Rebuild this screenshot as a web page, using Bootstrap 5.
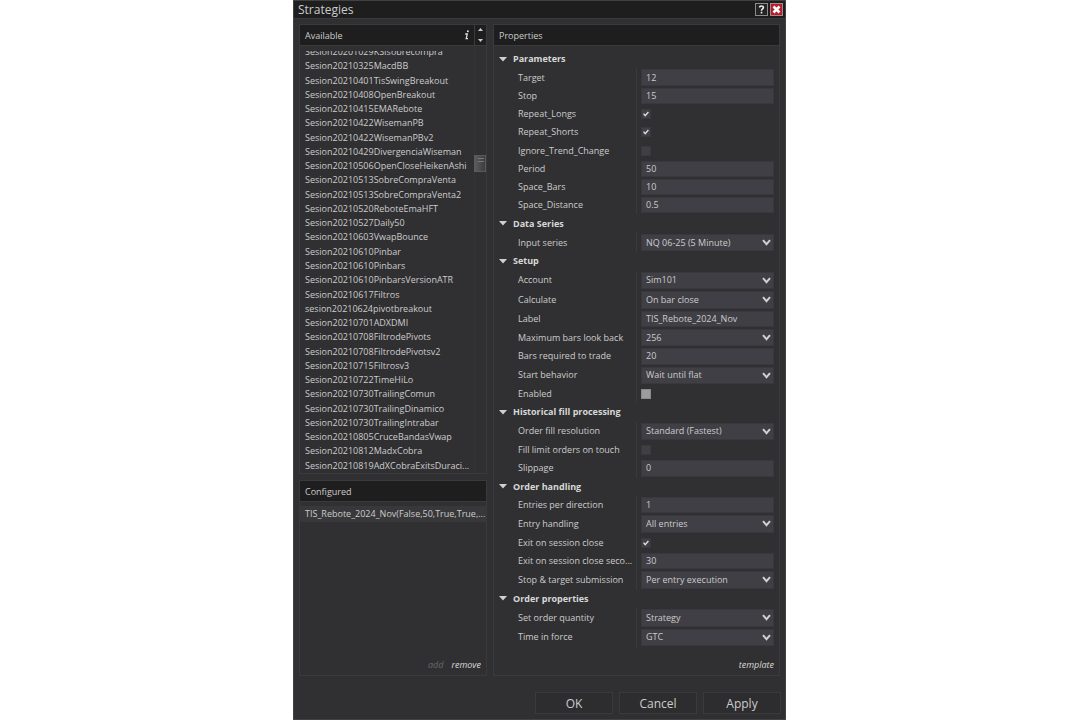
<!DOCTYPE html>
<html lang="en">
<head>
<meta charset="utf-8">
<meta name="viewport" content="width=device-width, initial-scale=1">
<title>Strategies</title>
<link href="https://cdn.jsdelivr.net/npm/bootstrap@5.3.0/dist/css/bootstrap.min.css" rel="stylesheet">
<style>
:root { --win: #303032; --bar: #1e1e1e; --line: #3a3a3c; --field: #403f45; --ink: #cccccc; }
body { font-family: "Open Sans", "Noto Sans", sans-serif; font-size: 9px; line-height: 14px; color: var(--ink); background: #fff; padding-right: 1px; }
button, input, select { font: inherit; color: inherit; }
.plain { background: none; border: 0; padding: 0; color: inherit; }
.dialog { width: 100%; max-width: 493px; background: var(--win); border: 1px solid #424244; }
.titlebar { background: var(--bar); height: 18px; border-bottom: 1px solid var(--line); padding: 0 2px 0 4px; }
.titlebar h1 { font-size: 12px; line-height: 16px; font-weight: 400; }
.window-buttons { gap: 2px; }
.sys { width: 13px; height: 13px; }
.sys svg, .sorter svg { display: block; }
.main { padding: 5px 5px 0; gap: 6px; }
.left { flex: 0 0 188px; min-width: 0; gap: 6px; }
.pane { border: 1px solid var(--line); min-width: 0; }
.pane-head { background: var(--bar); height: 21px; border-bottom: 1px solid var(--line); padding-left: 5px; font-size: 9px; line-height: 14px; font-weight: 400; }
.pane-head h2 { font: inherit; padding-top: 1px; }
.sorter { width: 12px; border-left: 1px solid var(--line); }
.viewport { margin-top: 5px; overflow: hidden; flex: 1 1 0; min-width: 0; min-height: 0; }
.names { height: calc(100% + 6px); margin-top: -6px; padding: 0 0 0 5px; }
.names li { flex: 1 1 0; min-height: 0; white-space: nowrap; }
.track { width: 12px; border-left: 1px solid #343436; padding-top: 109px; }
.thumb { height: 17px; margin-left: -1px; background: linear-gradient(90deg, #5c5c5e, #3c3c3e); border: 1px solid #5a5a5c; }
.configured { flex: 0 0 196px; }
.picked { margin-top: 4px; height: 16px; padding: 1px 0 0 5px; background: #38383a; }
.foot { height: 20px; padding: 0 5px; gap: 8px; font-style: italic; }
.foot a { color: #d8d8d8; text-decoration: none; }
.foot .off { color: #68686a; }
.props { padding: 4px 4px 0 5px; }
.group-name { flex: 2 0 18px; font-weight: 700; gap: 6px; color: #d8d8d8; text-align: left; }
.prop { flex: 1 0 18px; padding-left: 19px; }
.prop-pick { flex: 2 0 19px; }
.prop label { flex: 1 1 0; min-width: 0; padding-right: 4px; }
.cell { flex: 0 0 139px; border-left: 1px solid var(--line); padding: 1px 1px 1px 4px; }
.entry { background-color: var(--field); border: 1px solid #39383d; border-radius: 0; width: 100%; min-height: 0; height: 100%; padding: 0 4px; color: var(--ink); outline: 0; line-height: 14px; }
input.entry { padding-bottom: 1px; }
select.entry { appearance: none; background-image: url("data:image/svg+xml,%3Csvg xmlns='http://www.w3.org/2000/svg' width='9' height='7'%3E%3Cpath d='M1 1.2L4.5 5.2L8 1.2' fill='none' stroke='%23d0d0d0' stroke-width='2'/%3E%3C/svg%3E"); background-repeat: no-repeat; background-position: right 2px center; }
.check { appearance: none; width: 10px; height: 10px; margin: 0; background: var(--field) center no-repeat; border: 1px solid #39383d; }
.check:checked { background-image: url("data:image/svg+xml,%3Csvg xmlns='http://www.w3.org/2000/svg' width='8' height='8'%3E%3Cpath d='M1.6 3.6L3.2 5.6L6.4 2' fill='none' stroke='%23e0e0e0' stroke-width='1.4'/%3E%3C/svg%3E"); }
.check:disabled { background-color: #9c9c9c; border-color: #8a8a8a; }
.actions { padding: 16px 4px 5px; gap: 6px; }
.act { width: 78px; height: 22px; padding: 1px 0 0; border: 1px solid var(--line); border-radius: 0; font-size: 12px; line-height: 20px; color: var(--ink); background: #2d2d2f; }
</style>
</head>
<body>
<div class="d-flex justify-content-center min-vh-100">
<main class="dialog d-flex flex-column">
  <header class="titlebar d-flex align-items-center justify-content-between">
    <h1 class="m-0">Strategies</h1>
    <div class="window-buttons d-flex">
      <button class="plain sys" aria-label="Help"><svg width="13" height="13" viewBox="0 0 13 13"><rect x=".5" y=".5" width="12" height="12" fill="#242424" stroke="#8c8c8c"/><path d="M4.6 4.5C4.6 2.4 8.4 2.4 8.4 4.5C8.4 6 6.5 5.9 6.5 7.7M6.5 8.8V10.4" fill="none" stroke="#eee" stroke-width="1.6"/></svg></button>
      <button class="plain sys" aria-label="Close"><svg width="13" height="13" viewBox="0 0 13 13"><rect x=".5" y=".5" width="12" height="12" fill="#b51f2b" stroke="#a58a8c"/><path d="M3.5 3.5L9.5 9.5M9.5 3.5L3.5 9.5" stroke="#fff" stroke-width="2.6"/></svg></button>
    </div>
  </header>

  <div class="main d-flex flex-grow-1">
    <div class="left d-flex flex-column">
      <section class="pane d-flex flex-column flex-grow-1">
        <div class="pane-head d-flex align-items-center">
          <h2 class="m-0 flex-grow-1">Available</h2>
          <button class="plain me-1" aria-label="Information"><svg class="d-block" width="6" height="10" viewBox="0 0 6 10"><circle cx="3.9" cy="1.3" r="1" fill="#ddd"/><path d="M1.2 4H3.3L2.2 8.6H4" fill="none" stroke="#ddd" stroke-width="1.3"/></svg></button>
          <div class="sorter d-flex flex-column justify-content-center align-items-center align-self-stretch gap-2">
            <button class="plain" aria-label="Move up"><svg width="5" height="3"><path d="M0 3L2.5 0L5 3Z" fill="#ccc"/></svg></button>
            <button class="plain" aria-label="Move down"><svg width="5" height="3"><path d="M0 0L2.5 3L5 0Z" fill="#ccc"/></svg></button>
          </div>
        </div>
        <div class="d-flex flex-grow-1">
          <div class="viewport align-self-stretch">
            <ul class="names list-unstyled d-flex flex-column mb-0">
              <li>Sesion20201029KSIsobrecompra</li><li>Sesion20210325MacdBB</li><li>Sesion20210401TisSwingBreakout</li><li>Sesion20210408OpenBreakout</li><li>Sesion20210415EMARebote</li><li>Sesion20210422WisemanPB</li><li>Sesion20210422WisemanPBv2</li><li>Sesion20210429DivergenciaWiseman</li><li>Sesion20210506OpenCloseHeikenAshi</li><li>Sesion20210513SobreCompraVenta</li><li>Sesion20210513SobreCompraVenta2</li><li>Sesion20210520ReboteEmaHFT</li><li>Sesion20210527Daily50</li><li>Sesion20210603VwapBounce</li><li>Sesion20210610Pinbar</li><li>Sesion20210610Pinbars</li><li>Sesion20210610PinbarsVersionATR</li><li>Sesion20210617Filtros</li><li>sesion20210624pivotbreakout</li><li>Sesion20210701ADXDMI</li><li>Sesion20210708FiltrodePivots</li><li>Sesion20210708FiltrodePivotsv2</li><li>Sesion20210715Filtrosv3</li><li>Sesion20210722TimeHiLo</li><li>Sesion20210730TrailingComun</li><li>Sesion20210730TrailingDinamico</li><li>Sesion20210730TrailingIntrabar</li><li>Sesion20210805CruceBandasVwap</li><li>Sesion20210812MadxCobra</li><li>Sesion20210819AdXCobraExitsDuraci...</li>
            </ul>
          </div>
          <div class="track"><div class="thumb"><svg class="d-block ms-auto" width="8" height="8"><path d="M1 2.5H7M1 5.5H7" stroke="#777"/></svg></div></div>
        </div>
      </section>
      <section class="pane configured d-flex flex-column">
        <div class="pane-head d-flex align-items-center"><h2 class="m-0">Configured</h2></div>
        <div class="picked text-nowrap">TIS_Rebote_2024_Nov(False,50,True,True,...</div>
        <div class="foot d-flex justify-content-end align-items-center mt-auto"><a class="off" href="#" aria-disabled="true">add</a><a href="#">remove</a></div>
      </section>
    </div>

    <section class="pane d-flex flex-column flex-grow-1">
      <div class="pane-head d-flex align-items-center"><h2 class="m-0">Properties</h2></div>
      <form class="props d-flex flex-column flex-grow-1" id="props"></form>
      <div class="foot d-flex justify-content-end align-items-center mt-2"><a href="#">template</a></div>
    </section>
  </div>

  <footer class="actions d-flex justify-content-end">
    <button class="btn act">OK</button><button class="btn act">Cancel</button><button class="btn act">Apply</button>
  </footer>
</main>
</div>
<script src="https://cdn.jsdelivr.net/npm/bootstrap@5.3.0/dist/js/bootstrap.bundle.min.js"></script>
<script>
// Each group: title, then [label, kind, value]
const groups = [
  ["Parameters", ["Target","text","12"], ["Stop","text","15"], ["Repeat_Longs","tick","on"], ["Repeat_Shorts","tick","on"], ["Ignore_Trend_Change","tick",""], ["Period","text","50"], ["Space_Bars","text","10"], ["Space_Distance","text","0.5"]],
  ["Data Series", ["Input series","pick","NQ 06-25 (5 Minute)"]],
  ["Setup", ["Account","pick","Sim101"], ["Calculate","pick","On bar close"], ["Label","text","TIS_Rebote_2024_Nov"], ["Maximum bars look back","pick","256"], ["Bars required to trade","text","20"], ["Start behavior","pick","Wait until flat"], ["Enabled","tick","disabled"]],
  ["Historical fill processing", ["Order fill resolution","pick","Standard (Fastest)"], ["Fill limit orders on touch","tick",""], ["Slippage","text","0"]],
  ["Order handling", ["Entries per direction","text","1"], ["Entry handling","pick","All entries"], ["Exit on session close","tick","on"], ["Exit on session close seco...","text","30"], ["Stop &amp; target submission","pick","Per entry execution"]],
  ["Order properties", ["Set order quantity","pick","Strategy"], ["Time in force","pick","GTC"]]
];
let n = 0;
const control = (id, kind, v) =>
  kind === "text" ? `<input class="entry" type="text" id="${id}" value="${v}">` :
  kind === "pick" ? `<select class="entry" id="${id}"><option>${v}</option></select>` :
  `<input class="check" type="checkbox" id="${id}" ${v === "on" ? "checked" : v}>`;
document.getElementById("props").innerHTML = groups.map(([title, ...rows]) =>
  `<button type="button" class="plain group-name d-flex align-items-center"><svg width="8" height="5"><path d="M0 0H8L4 4.5Z" fill="#d0d0d0"/></svg>${title}</button>` +
  rows.map(([label, kind, v]) => { const id = "p" + n++;
    return `<div class="prop prop-${kind} d-flex align-items-center"><label class="text-nowrap" for="${id}">${label}</label><div class="cell d-flex align-items-center align-self-stretch">${control(id, kind, v)}</div></div>`; }).join("")
).join("");
</script>
</body>
</html>
